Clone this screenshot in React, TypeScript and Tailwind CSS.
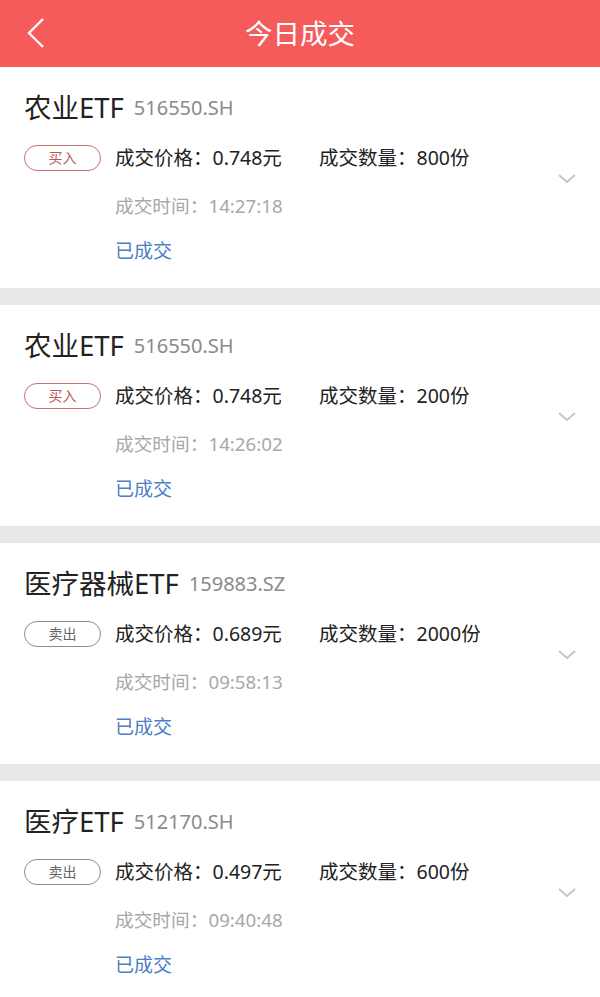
type Trade = {
  name: string
  code: string
  side: 'buy' | 'sell'
  price: string
  qty: string
  time: string
}

const trades: Trade[] = [
  { name: '农业ETF', code: '516550.SH', side: 'buy', price: '0.748', qty: '800', time: '14:27:18' },
  { name: '农业ETF', code: '516550.SH', side: 'buy', price: '0.748', qty: '200', time: '14:26:02' },
  { name: '医疗器械ETF', code: '159883.SZ', side: 'sell', price: '0.689', qty: '2000', time: '09:58:13' },
  { name: '医疗ETF', code: '512170.SH', side: 'sell', price: '0.497', qty: '600', time: '09:40:48' },
]

const font = { fontFamily: '"Noto Sans", "Noto Sans CJK SC", sans-serif' }

function TradeCard({ t }: { t: Trade }) {
  const buy = t.side === 'buy'
  return (
    <div className="relative h-[221px] bg-white pl-[24px] pt-[23px]">
      <div className="flex h-[36px] items-center">
        <span className="text-[27.5px] leading-none text-[#222]">{t.name}</span>
        <span className="ml-[10px] text-[20px] leading-none text-[#8a8a8a]">{t.code}</span>
      </div>
      <div className="mt-[19px] flex h-[26px] items-center">
        <div
          className={
            'flex h-[26px] w-[77px] items-center justify-center rounded-full border text-[14px] leading-none ' +
            (buy ? 'border-[#c77070] text-[#b95a5a]' : 'border-[#8c8c8c] text-[#666]')
          }
        >
          {buy ? '买入' : '卖出'}
        </div>
        <div className="ml-[14px] w-[204px] text-[19.5px] leading-none text-[#222]">
          成交价格：{t.price}元
        </div>
        <div className="text-[19.5px] leading-none text-[#222]">成交数量：{t.qty}份</div>
      </div>
      <div className="mt-[22px] flex h-[26px] items-center pl-[91px] text-[18.7px] leading-none text-[#a8a8a8]">
        成交时间：{t.time}
      </div>
      <div className="mt-[19px] flex h-[26px] items-center pl-[91px] text-[19px] leading-none text-[#4c7fc6]">
        已成交
      </div>
      <svg
        className="absolute right-[23px] top-[105px]"
        width="20"
        height="14"
        viewBox="0 0 20 14"
        fill="none"
      >
        <path d="M2 3l8 7 8-7" stroke="#c4c4c4" strokeWidth="1.8" />
      </svg>
    </div>
  )
}

export default function App() {
  return (
    <div className="min-h-[997px] w-[600px] bg-[#e8e8e8]" style={font}>
      <div className="relative flex h-[67px] items-center justify-center bg-[#f65b5b]">
        <svg className="absolute left-[26px] top-[17px]" width="20" height="32" viewBox="0 0 20 32" fill="none">
          <path d="M17 2L3 16l14 14" stroke="white" strokeWidth="2.4" />
        </svg>
        <span className="text-[27.5px] leading-none text-white">今日成交</span>
      </div>
      <div className="flex flex-col gap-[17px]">
        {trades.map((t, i) => (
          <TradeCard key={i} t={t} />
        ))}
      </div>
    </div>
  )
}
